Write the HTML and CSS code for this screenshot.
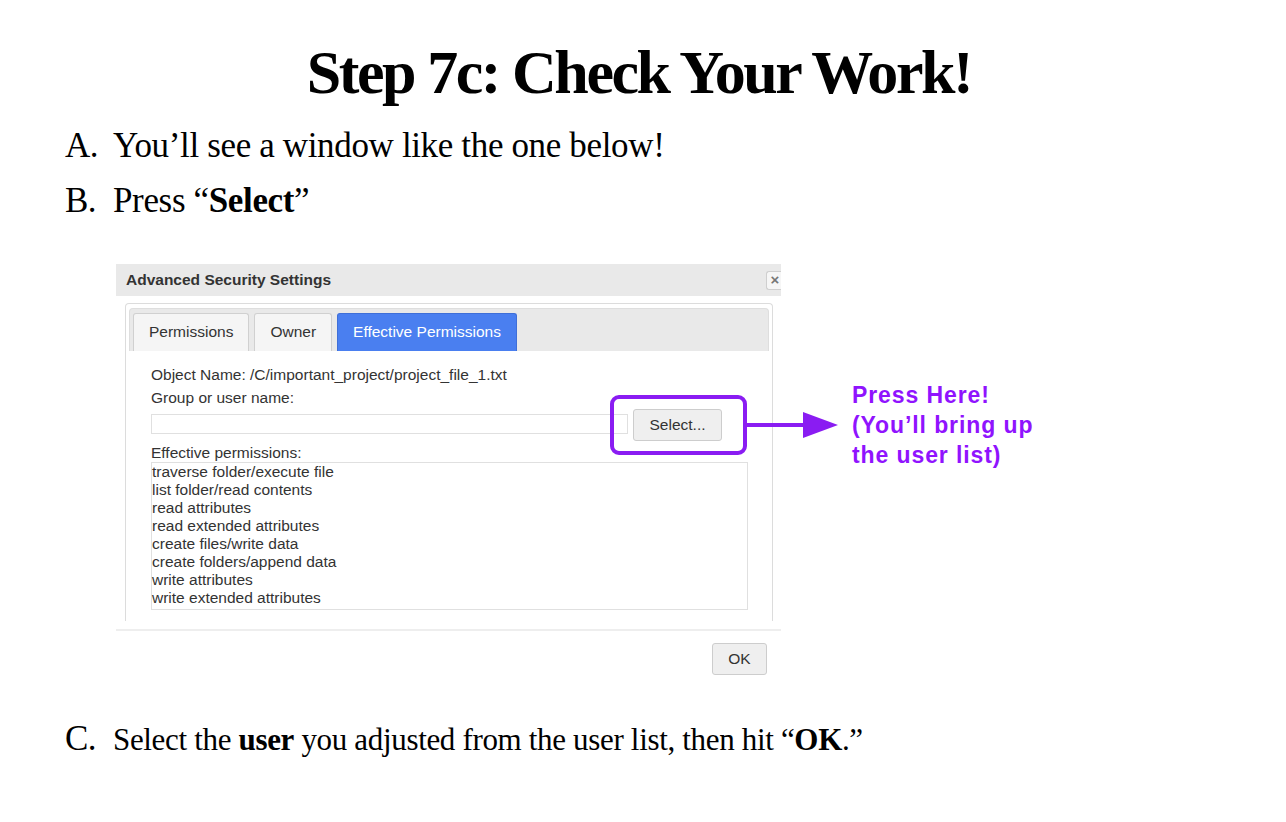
FILE: index.html
```html
<!DOCTYPE html>
<html>
<head>
<meta charset="utf-8">
<link rel="stylesheet" href="styles.css">
</head>
<body>
<div class="page">
  <h1 class="title">Step 7c: Check Your Work!</h1>
  <div class="steps">
    <div class="step"><span class="marker">A.</span><span class="step-text">You’ll see a window like the one below!</span></div>
    <div class="step"><span class="marker">B.</span><span class="step-text">Press “<b>Select</b>”</span></div>
  </div>

  <div class="figure">
    <div class="dialog">
      <div class="dlg-header">
        <span class="dlg-title">Advanced Security Settings</span>
        <span class="dlg-close">×</span>
      </div>
      <div class="dlg-body">
        <div class="panel">
          <div class="tabbar">
            <span class="tab">Permissions</span>
            <span class="tab">Owner</span>
            <span class="tab tab-active">Effective Permissions</span>
          </div>
          <div class="panel-content">
            <div class="line obj-name">Object Name: /C/important_project/project_file_1.txt</div>
            <div class="line group-label">Group or user name:</div>
            <div class="user-row">
              <div class="user-input"></div>
              <div class="btn btn-select">Select...</div>
            </div>
            <div class="line eff-label">Effective permissions:</div>
            <div class="perm-list">
              <div>traverse folder/execute file</div>
              <div>list folder/read contents</div>
              <div>read attributes</div>
              <div>read extended attributes</div>
              <div>create files/write data</div>
              <div>create folders/append data</div>
              <div>write attributes</div>
              <div>write extended attributes</div>
            </div>
          </div>
        </div>
      </div>
      <div class="dlg-footer">
        <div class="btn btn-ok">OK</div>
      </div>
    </div>

    <div class="highlight"></div>
    <svg class="arrow" width="92" height="26" viewBox="0 0 92 26">
      <line x1="0" y1="13" x2="60" y2="13" stroke="#8a1cf2" stroke-width="4"/>
      <polygon points="56,0 91,13 56,26" fill="#8a1cf2"/>
    </svg>
    <div class="callout">Press Here!<br>(You’ll bring up<br>the user list)</div>
  </div>

  <div class="steps steps-c">
    <div class="step"><span class="marker">C.</span><span class="step-text small">Select the <b>user</b> you adjusted from the user list, then hit “<b>OK</b>.”</span></div>
  </div>
</div>
</body>
</html>
```

FILE: styles.css
```css
html, body {
  margin: 0;
  padding: 0;
  background: #ffffff;
}

.page {
  width: 1286px;
  font-family: "Liberation Serif", "Times New Roman", serif;
  color: #000;
}

.title {
  margin: 36px 0 0 0;
  padding-right: 8px;
  font-size: 62px;
  line-height: 72px;
  font-weight: bold;
  letter-spacing: -2.45px;
  text-align: center;
}

.steps {
  margin-top: 10px;
  padding-left: 65px;
}

.step {
  display: flex;
  align-items: baseline;
  height: 55px;
  line-height: 55px;
  font-size: 35px;
}

.marker {
  width: 48px;
  flex: none;
  letter-spacing: -0.5px;
}

.step-text {
  letter-spacing: -0.35px;
  white-space: nowrap;
}

.step-text.small {
  font-size: 31px;
  letter-spacing: -0.33px;
}

.steps-c {
  margin-top: 22px;
}

/* ---------- dialog figure ---------- */
.figure {
  position: relative;
  margin: 36px 0 0 116px;
  width: 665px;
}

.dialog {
  width: 665px;
  background: #fff;
  font-family: "Liberation Sans", Arial, sans-serif;
  color: #333;
}

.dlg-header {
  height: 32px;
  background: #e9e9e9;
  display: flex;
  align-items: center;
  justify-content: space-between;
  padding-left: 10px;
}

.dlg-title {
  font-size: 15.5px;
  font-weight: bold;
  color: #333;
}

.dlg-close {
  width: 15px;
  height: 19px;
  margin-top: 1px;
  box-sizing: border-box;
  background: #f6f6f6;
  border: 1px solid #cfcfcf;
  border-right: none;
  border-radius: 3px 0 0 3px;
  font-size: 15px;
  font-weight: bold;
  line-height: 16px;
  color: #777;
  text-align: center;
  padding-left: 2px;
}

.dlg-body {
  padding: 7px 8px 0 9px;
}

.panel {
  height: 318px;
  box-sizing: border-box;
  border: 1px solid #dcdcdc;
  border-bottom: none;
  border-radius: 4px 4px 0 0;
  padding: 4px 3px 0 3px;
}

.tabbar {
  height: 43px;
  box-sizing: border-box;
  background: #e9e9e9;
  border: 1px solid #dedede;
  border-bottom: none;
  border-radius: 4px 4px 0 0;
  display: flex;
  align-items: flex-end;
  gap: 5px;
  padding-left: 3px;
}

.tab {
  height: 38px;
  box-sizing: border-box;
  padding: 0 15px;
  background: #f5f5f5;
  border: 1px solid #d0d0d0;
  border-bottom: none;
  border-radius: 3px 3px 0 0;
  font-size: 15.5px;
  line-height: 36px;
  color: #333;
}

.tab-active {
  background: #4a7ff0;
  border-color: #3f6fd8;
  color: #fff;
}

.panel-content {
  padding-left: 22px;
  font-size: 15.5px;
}

.line {
  height: 18px;
  line-height: 18px;
  white-space: nowrap;
}

.obj-name {
  margin-top: 15px;
}

.group-label {
  margin-top: 5px;
}

.user-row {
  display: flex;
  align-items: center;
  gap: 5px;
  height: 32px;
  margin-top: 1px;
}

.user-input {
  width: 477px;
  height: 20px;
  box-sizing: border-box;
  border: 1px solid #e0e0e0;
  background: #fff;
}

.btn {
  box-sizing: border-box;
  background: #efefef;
  border: 1px solid #cdcdcd;
  border-radius: 3px;
  text-align: center;
  color: #333;
  font-family: "Liberation Sans", Arial, sans-serif;
}

.btn-select {
  width: 89px;
  height: 32px;
  line-height: 30px;
  font-size: 15.5px;
  margin-top: 1px;
}

.eff-label {
  margin-top: 4px;
}

.perm-list {
  width: 597px;
  height: 148px;
  box-sizing: border-box;
  border: 1px solid #e0e0e0;
  line-height: 18px;
  font-size: 15.5px;
  color: #333;
}

.dlg-footer {
  border-top: 2px solid #eeeeee;
  margin-top: 8px;
  display: flex;
  justify-content: flex-end;
  padding: 12px 14px 14px 0;
}

.btn-ok {
  width: 55px;
  height: 32px;
  line-height: 30px;
  font-size: 15.5px;
}

/* ---------- annotations ---------- */
.highlight {
  position: absolute;
  left: 494px;
  top: 131px;
  width: 137px;
  height: 60px;
  box-sizing: border-box;
  border: 4px solid #8a1cf2;
  border-radius: 9px;
}

.arrow {
  position: absolute;
  left: 631px;
  top: 148px;
}

.callout {
  position: absolute;
  left: 736px;
  top: 116px;
  white-space: nowrap;
  font-family: "Liberation Sans", Arial, sans-serif;
  font-weight: bold;
  font-size: 23px;
  letter-spacing: 0.9px;
  line-height: 30px;
  color: #9013fe;
}
```
